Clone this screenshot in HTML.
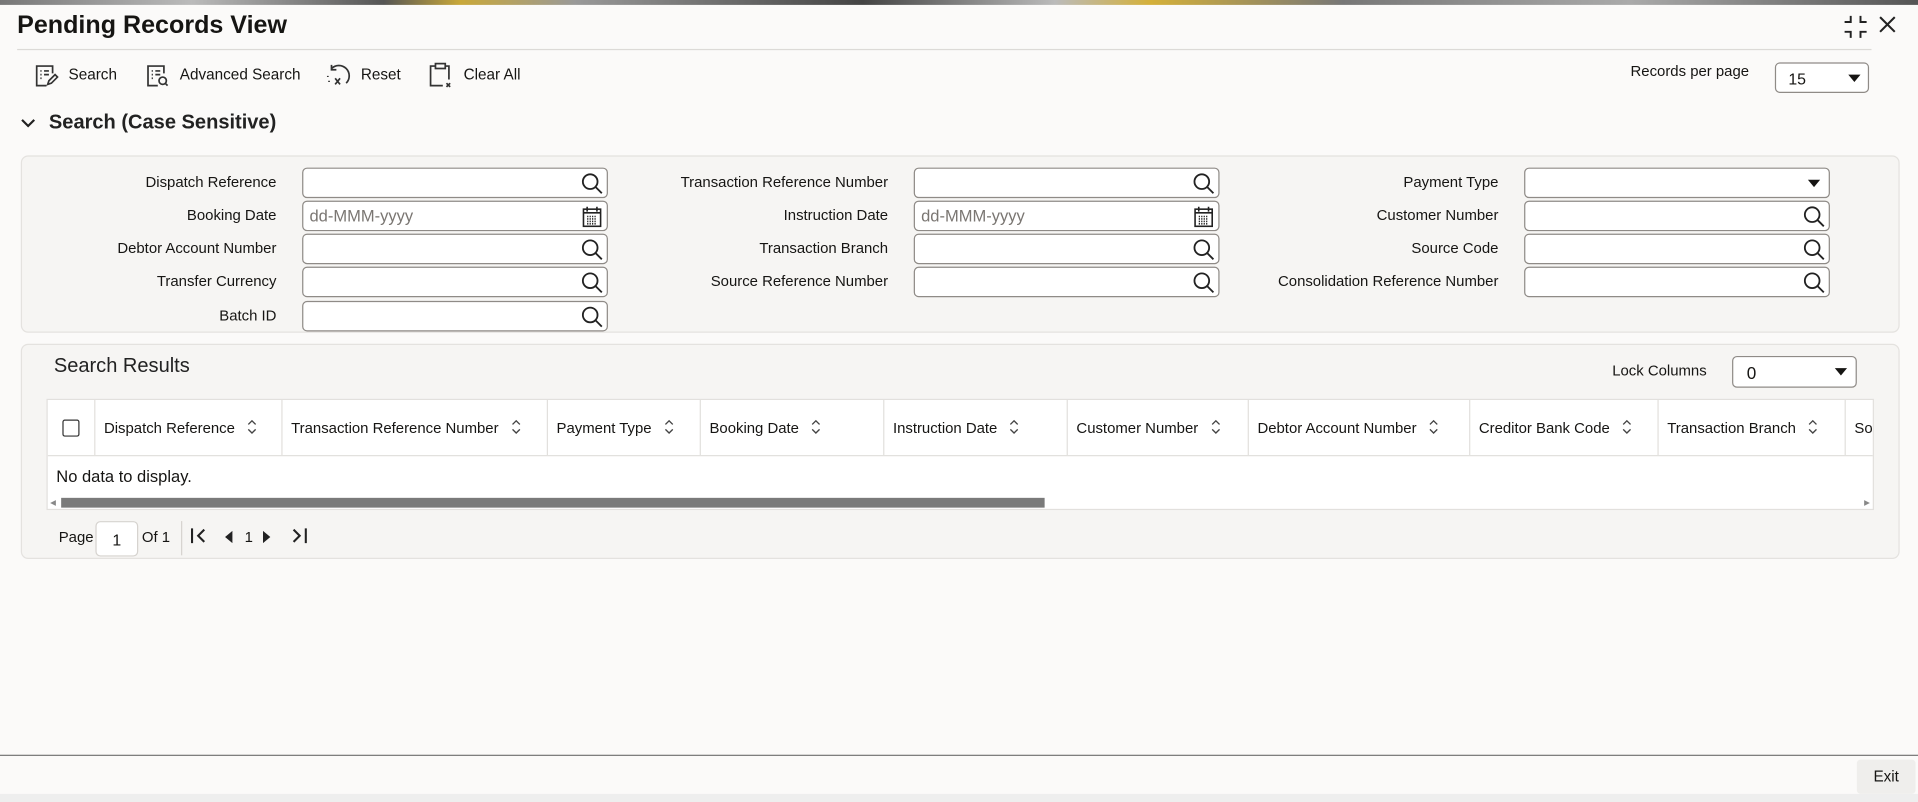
<!DOCTYPE html>
<html><head><meta charset="utf-8"><style>
*{box-sizing:border-box;margin:0;padding:0}
html,body{width:1918px;height:802px;overflow:hidden;background:#fbfaf9;font-family:"Liberation Sans",sans-serif;color:#161513}
#w{position:absolute;left:0;top:0;width:1568px;height:656px;transform:scale(1.22321);transform-origin:0 0;font-size:12.2px}
.a{position:absolute;white-space:nowrap}
.panel{position:absolute;background:#f6f5f3;border:1px solid #e4e2df;border-radius:6px}
.lbl{position:absolute;text-align:right;width:300px;font-size:12.2px}
.inp{position:absolute;width:250px;height:25px;background:#fff;border:1px solid #8f8b87;border-radius:4px}
.inp svg{position:absolute;right:2px;top:2px}
.ph{position:absolute;left:5px;top:4px;color:#7a7672;font-size:13.5px}
.th{position:absolute;top:0;height:45px;border-right:1px solid #e2e0dd;padding:16px 0 0 7px;font-size:12.2px;white-space:nowrap;overflow:hidden}
.sort{display:inline-block;margin-left:10px;vertical-align:-1px}
.dd{position:absolute;width:0;height:0;border-left:5px solid transparent;border-right:5px solid transparent;border-top:6px solid #161513}
</style></head><body><div id="w">
<div class="a" style="left:0;top:0;width:1568px;height:4px;background:linear-gradient(90deg,#777,#bbb 10%,#555 20%,#c9a83a 24%,#999 30%,#444 45%,#bbb 55%,#d4b03a 60%,#777 70%,#aaa 85%,#555)"></div>
<div class="a" style="left:14px;top:9px;font-size:20.5px;font-weight:bold">Pending Records View</div>
<svg class="a" style="left:1507px;top:12px" width="20" height="20" viewBox="0 0 20 20" fill="none" stroke="#222" stroke-width="1.6"><path d="M6 1v5H1M14 1v5h5M6 19v-5H1M14 19v-5h5"/></svg>
<svg class="a" style="left:1536px;top:13px" width="14" height="14" viewBox="0 0 14 14" fill="none" stroke="#222" stroke-width="1.7"><path d="M1 1l12 12M13 1L1 13"/></svg>
<div class="a" style="left:14px;top:40px;width:1516px;height:1px;background:#dcdad7"></div>

<svg class="a" style="left:28px;top:52px" width="20" height="20" viewBox="0 0 20 20" fill="none" stroke="#333" stroke-width="1.4"><path d="M15 8V2H2v16h8"/><path d="M5 6h1M8 6h4M5 9h1M8 9h4M5 12h1"/><path d="M11 17l1-3 5-5 2 2-5 5z"/></svg>
<div class="a" style="left:56px;top:54px;font-size:12.5px">Search</div>
<svg class="a" style="left:119px;top:52px" width="20" height="20" viewBox="0 0 20 20" fill="none" stroke="#333" stroke-width="1.4"><path d="M15 8V2H2v16h8"/><path d="M5 6h1M8 6h4M5 9h1M8 9h4M5 12h1"/><circle cx="14" cy="14" r="3"/><path d="M16 16l2 2"/></svg>
<div class="a" style="left:147px;top:54px;font-size:12.5px">Advanced Search</div>
<svg class="a" style="left:266px;top:52px" width="22" height="20" viewBox="0 0 22 20" fill="none" stroke="#333" stroke-width="1.4"><path d="M5 4a8 8 0 1 1 12 12"/><path d="M5 1v4h4"/><path d="M8 12l4 5M12 12l-4 5"/><path d="M2 10v1M3 14v1"/></svg>
<div class="a" style="left:295px;top:54px;font-size:12.5px">Reset</div>
<svg class="a" style="left:350px;top:51px" width="20" height="21" viewBox="0 0 20 21" fill="none" stroke="#333" stroke-width="1.4"><path d="M6 3H2v16h10M14 3h3v11"/><rect x="6" y="1" width="8" height="4"/><path d="M15 17l3 3M18 17l-3 3"/></svg>
<div class="a" style="left:379px;top:54px;font-size:12.5px">Clear All</div>

<div class="a" style="left:1333px;top:51px;font-size:12.2px">Records per page</div>
<div class="a" style="left:1451px;top:51px;width:77px;height:25px;background:#fff;border:1px solid #8f8b87;border-radius:4px"><span class="a" style="left:10px;top:5px;font-size:13px">15</span><span class="dd" style="left:59px;top:9px"></span></div>

<svg class="a" style="left:17px;top:96px" width="12" height="9" viewBox="0 0 12 9"><path d="M1 2l5 5 5-5" fill="none" stroke="#222" stroke-width="1.8"/></svg>
<div class="a" style="left:40px;top:91px;font-size:16.4px;font-weight:bold;color:#222">Search (Case Sensitive)</div>

<div class="panel" style="left:17px;top:127px;width:1536px;height:145px"></div>
<div class="lbl" style="left:-74px;top:142px">Dispatch Reference</div>
<div class="lbl" style="left:-74px;top:169px">Booking Date</div>
<div class="lbl" style="left:-74px;top:196px">Debtor Account Number</div>
<div class="lbl" style="left:-74px;top:223px">Transfer Currency</div>
<div class="lbl" style="left:-74px;top:251px">Batch ID</div>
<div class="lbl" style="left:426px;top:142px">Transaction Reference Number</div>
<div class="lbl" style="left:426px;top:169px">Instruction Date</div>
<div class="lbl" style="left:426px;top:196px">Transaction Branch</div>
<div class="lbl" style="left:426px;top:223px">Source Reference Number</div>
<div class="lbl" style="left:925px;top:142px">Payment Type</div>
<div class="lbl" style="left:925px;top:169px">Customer Number</div>
<div class="lbl" style="left:925px;top:196px">Source Code</div>
<div class="lbl" style="left:925px;top:223px">Consolidation Reference Number</div>

<div class="inp" style="left:247px;top:137px"><svg width="20" height="20" viewBox="0 0 20 20" fill="none" stroke="#222" stroke-width="1.5"><circle cx="8.5" cy="8.5" r="6"/><path d="M13 13l5 5"/></svg></div>
<div class="inp" style="left:247px;top:164px"><span class="ph">dd-MMM-yyyy</span><svg width="20" height="20" viewBox="0 0 20 20" fill="none" stroke="#222" stroke-width="1.3"><rect x="3" y="4" width="14" height="14"/><path d="M3 7h14M6 2v4M14 2v4"/><path d="M6 10h8M6 12h8M6 14h8M6 16h8" stroke-dasharray="1 1"/></svg></div>
<div class="inp" style="left:247px;top:191px"><svg width="20" height="20" viewBox="0 0 20 20" fill="none" stroke="#222" stroke-width="1.5"><circle cx="8.5" cy="8.5" r="6"/><path d="M13 13l5 5"/></svg></div>
<div class="inp" style="left:247px;top:218px"><svg width="20" height="20" viewBox="0 0 20 20" fill="none" stroke="#222" stroke-width="1.5"><circle cx="8.5" cy="8.5" r="6"/><path d="M13 13l5 5"/></svg></div>
<div class="inp" style="left:247px;top:246px"><svg width="20" height="20" viewBox="0 0 20 20" fill="none" stroke="#222" stroke-width="1.5"><circle cx="8.5" cy="8.5" r="6"/><path d="M13 13l5 5"/></svg></div>

<div class="inp" style="left:747px;top:137px"><svg width="20" height="20" viewBox="0 0 20 20" fill="none" stroke="#222" stroke-width="1.5"><circle cx="8.5" cy="8.5" r="6"/><path d="M13 13l5 5"/></svg></div>
<div class="inp" style="left:747px;top:164px"><span class="ph">dd-MMM-yyyy</span><svg width="20" height="20" viewBox="0 0 20 20" fill="none" stroke="#222" stroke-width="1.3"><rect x="3" y="4" width="14" height="14"/><path d="M3 7h14M6 2v4M14 2v4"/><path d="M6 10h8M6 12h8M6 14h8M6 16h8" stroke-dasharray="1 1"/></svg></div>
<div class="inp" style="left:747px;top:191px"><svg width="20" height="20" viewBox="0 0 20 20" fill="none" stroke="#222" stroke-width="1.5"><circle cx="8.5" cy="8.5" r="6"/><path d="M13 13l5 5"/></svg></div>
<div class="inp" style="left:747px;top:218px"><svg width="20" height="20" viewBox="0 0 20 20" fill="none" stroke="#222" stroke-width="1.5"><circle cx="8.5" cy="8.5" r="6"/><path d="M13 13l5 5"/></svg></div>

<div class="inp" style="left:1246px;top:137px"><span class="dd" style="left:231px;top:9px"></span></div>
<div class="inp" style="left:1246px;top:164px"><svg width="20" height="20" viewBox="0 0 20 20" fill="none" stroke="#222" stroke-width="1.5"><circle cx="8.5" cy="8.5" r="6"/><path d="M13 13l5 5"/></svg></div>
<div class="inp" style="left:1246px;top:191px"><svg width="20" height="20" viewBox="0 0 20 20" fill="none" stroke="#222" stroke-width="1.5"><circle cx="8.5" cy="8.5" r="6"/><path d="M13 13l5 5"/></svg></div>
<div class="inp" style="left:1246px;top:218px"><svg width="20" height="20" viewBox="0 0 20 20" fill="none" stroke="#222" stroke-width="1.5"><circle cx="8.5" cy="8.5" r="6"/><path d="M13 13l5 5"/></svg></div>

<div class="panel" style="left:17px;top:281px;width:1536px;height:176px"></div>
<div class="a" style="left:44px;top:290px;font-size:16.4px;color:#222">Search Results</div>
<div class="a" style="left:1318px;top:296px;font-size:12.2px">Lock Columns</div>
<div class="a" style="left:1416px;top:291px;width:102px;height:26px;background:#fff;border:1px solid #8f8b87;border-radius:4px"><span class="a" style="left:11px;top:5px;font-size:14px">0</span><span class="dd" style="left:83px;top:9px"></span></div>

<div class="a" style="left:38px;top:326px;width:1494px;height:91px;background:#fff;border:1px solid #e2e0dd;overflow:hidden">
 <div class="a" style="left:0;top:45px;width:1494px;height:1px;background:#e2e0dd"></div>
 <div class="th" style="left:0;width:39px"><span class="a" style="left:12px;top:16px;width:14px;height:14px;border:1.5px solid #333;border-radius:2px"></span></div>
 <div class="th" style="left:39px;width:153px">Dispatch Reference<svg class="sort" width="8" height="12" viewBox="0 0 8 12" fill="none" stroke="#444" stroke-width="1.1"><path d="M1 4l3-3 3 3M1 8l3 3 3-3"/></svg></div>
 <div class="th" style="left:192px;width:217px">Transaction Reference Number<svg class="sort" width="8" height="12" viewBox="0 0 8 12" fill="none" stroke="#444" stroke-width="1.1"><path d="M1 4l3-3 3 3M1 8l3 3 3-3"/></svg></div>
 <div class="th" style="left:409px;width:125px">Payment Type<svg class="sort" width="8" height="12" viewBox="0 0 8 12" fill="none" stroke="#444" stroke-width="1.1"><path d="M1 4l3-3 3 3M1 8l3 3 3-3"/></svg></div>
 <div class="th" style="left:534px;width:150px">Booking Date<svg class="sort" width="8" height="12" viewBox="0 0 8 12" fill="none" stroke="#444" stroke-width="1.1"><path d="M1 4l3-3 3 3M1 8l3 3 3-3"/></svg></div>
 <div class="th" style="left:684px;width:150px">Instruction Date<svg class="sort" width="8" height="12" viewBox="0 0 8 12" fill="none" stroke="#444" stroke-width="1.1"><path d="M1 4l3-3 3 3M1 8l3 3 3-3"/></svg></div>
 <div class="th" style="left:834px;width:148px">Customer Number<svg class="sort" width="8" height="12" viewBox="0 0 8 12" fill="none" stroke="#444" stroke-width="1.1"><path d="M1 4l3-3 3 3M1 8l3 3 3-3"/></svg></div>
 <div class="th" style="left:982px;width:181px">Debtor Account Number<svg class="sort" width="8" height="12" viewBox="0 0 8 12" fill="none" stroke="#444" stroke-width="1.1"><path d="M1 4l3-3 3 3M1 8l3 3 3-3"/></svg></div>
 <div class="th" style="left:1163px;width:154px">Creditor Bank Code<svg class="sort" width="8" height="12" viewBox="0 0 8 12" fill="none" stroke="#444" stroke-width="1.1"><path d="M1 4l3-3 3 3M1 8l3 3 3-3"/></svg></div>
 <div class="th" style="left:1317px;width:153px">Transaction Branch<svg class="sort" width="8" height="12" viewBox="0 0 8 12" fill="none" stroke="#444" stroke-width="1.1"><path d="M1 4l3-3 3 3M1 8l3 3 3-3"/></svg></div>
 <div class="th" style="left:1470px;width:40px;border:none">Source</div>
 <div class="a" style="left:7px;top:55px;font-size:13.5px">No data to display.</div>
 <div class="a" style="left:2px;top:81px;font-size:6px;color:#888">◀</div>
 <div class="a" style="left:11px;top:80px;width:804px;height:8px;background:#7a7a7a"></div>
 <div class="a" style="left:1485px;top:81px;font-size:6px;color:#888">▶</div>
</div>

<div class="a" style="left:48px;top:432px;font-size:12.2px">Page</div>
<div class="a" style="left:78px;top:426px;width:35px;height:29px;background:#fff;border:1px solid #d6d3cf;border-radius:4px;text-align:center;padding-top:7px;font-size:13px">1</div>
<div class="a" style="left:116px;top:432px;font-size:12.2px">Of 1</div>
<div class="a" style="left:148px;top:426px;width:1px;height:28px;background:#d6d3cf"></div>
<svg class="a" style="left:155px;top:431px" width="16" height="14" viewBox="0 0 16 14" fill="none" stroke="#222" stroke-width="1.7"><path d="M2 1v12M12 2l-5 5 5 5"/></svg>
<svg class="a" style="left:183px;top:434px" width="8" height="10" viewBox="0 0 8 10"><path d="M7 0v10L1 5z" fill="#222"/></svg>
<div class="a" style="left:200px;top:432px;font-size:12.2px">1</div>
<svg class="a" style="left:214px;top:434px" width="8" height="10" viewBox="0 0 8 10"><path d="M1 0v10l6-5z" fill="#222"/></svg>
<svg class="a" style="left:237px;top:431px" width="16" height="14" viewBox="0 0 16 14" fill="none" stroke="#222" stroke-width="1.7"><path d="M3 2l5 5-5 5M13 1v12"/></svg>

<div class="a" style="left:0;top:617px;width:1568px;height:1px;background:#777"></div>
<div class="a" style="left:1518px;top:621px;width:48px;height:28px;background:#efeeec;border-radius:3px;text-align:center;padding-top:7px;font-size:12.5px">Exit</div>
<div class="a" style="left:0;top:649px;width:1568px;height:7px;background:#eeeeee"></div>
</div></body></html>
